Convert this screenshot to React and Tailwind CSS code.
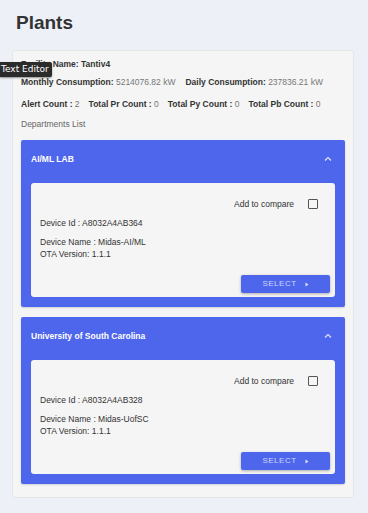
import React from 'react';

const devices = [
  {
    dept: 'AI/ML LAB',
    id: 'A8032A4AB364',
    name: 'Midas-AI/ML',
    ota: '1.1.1',
  },
  {
    dept: 'University of South Carolina',
    id: 'A8032A4AB328',
    name: 'Midas-UofSC',
    ota: '1.1.1',
  },
];

// Department panel with a single device card
const DepartmentPanel = ({ dept, id, name, ota }) => (
  <div className="bg-[#4e66ec] rounded-[2px] px-[10px] pb-[10px] shadow-[0_1px_2px_rgba(0,0,0,0.15)]">
    <div className="flex items-center justify-between pt-[13px] pb-[18px] leading-[12px]">
      <span className="text-white font-bold text-[8.5px]">{dept}</span>
      <svg width="8" height="6" viewBox="0 0 8 6" className="mr-[3px]">
        <path d="M1 4.5 L4 1.5 L7 4.5" fill="none" stroke="#dfe3ff" strokeWidth="1.2" />
      </svg>
    </div>
    <div className="bg-[#f5f5f5] rounded-[3px] pt-[15px] pb-[4px] pl-[9px] pr-[5px] text-[8.5px] text-[#333] leading-[12px]">
      <div className="flex items-center justify-end pr-[12px]">
        <span>Add to compare</span>
        <span className="ml-[14px] w-[10px] h-[10px] border-[1.5px] border-[#555] rounded-[1px]" />
      </div>
      <div className="mt-[7px]">Device Id : {id}</div>
      <div className="mt-[7px]">Device Name : {name}</div>
      <div className="leading-[13px]">OTA Version: {ota}</div>
      <div className="flex justify-end mt-[14px]">
        <button
          type="button"
          className="w-[89px] h-[18px] bg-[#4e66ec] rounded-[2px] shadow-[0_1px_3px_rgba(0,0,0,0.3)] flex items-center justify-center gap-[8px] text-[#cfd6ff] text-[8px] tracking-[0.5px]"
        >
          <span>SELECT</span>
          <svg width="4" height="5" viewBox="0 0 4 5">
            <path d="M0.5 0.5 L3.5 2.5 L0.5 4.5 Z" fill="#dfe3ff" />
          </svg>
        </button>
      </div>
    </div>
  </div>
);

const App = () => {
  return (
    <div className="relative w-[368px] h-[513px] bg-[#eef0f8] font-['Liberation_Sans',Arial,sans-serif] overflow-hidden">
      <h1 className="pl-[16px] pt-[11px] text-[19px] leading-[24px] font-bold text-[#333]">Plants</h1>

      {/* Facility card */}
      <div className="mt-[15px] ml-[12px] w-[342px] bg-[#f5f5f5] border border-[#e6e6ea] rounded-[3px] px-[8px] pt-[7px] pb-[13px]">
        <div className="text-[8.5px] leading-[12px] text-[#333]">
          <div className="font-bold">Facility Name: Tantiv4</div>
          <div className="mt-[6px] flex gap-[10px]">
            <span>
              <b>Monthly Consumption:</b> <span className="text-[#777]">5214076.82 kW</span>
            </span>
            <span>
              <b>Daily Consumption:</b> <span className="text-[#777]">237836.21 kW</span>
            </span>
          </div>
          <div className="mt-[10px] flex gap-[9px]">
            <span>
              <b>Alert Count :</b> <span className="text-[#777]">2</span>
            </span>
            <span>
              <b>Total Pr Count :</b> <span className="text-[#777]">0</span>
            </span>
            <span>
              <b>Total Py Count :</b> <span className="text-[#777]">0</span>
            </span>
            <span>
              <b>Total Pb Count :</b> <span className="text-[#777]">0</span>
            </span>
          </div>
          <div className="mt-[8px] text-[#666]">Departments List</div>
        </div>

        <div className="mt-[10px] flex flex-col gap-[10px]">
          {devices.map((d) => (
            <DepartmentPanel key={d.id} {...d} />
          ))}
        </div>
      </div>

      {/* Tooltip overlay */}
      <div className="absolute left-0 top-[62px] h-[15px] pl-[1px] pr-[3px] bg-[#2b2b2b] rounded-r-[2px] text-white text-[9px] leading-[15px] font-['DejaVu_Sans',sans-serif] shadow-[0_1px_2px_rgba(0,0,0,0.4)]">
        Text Editor
      </div>
    </div>
  );
};

export default App;
